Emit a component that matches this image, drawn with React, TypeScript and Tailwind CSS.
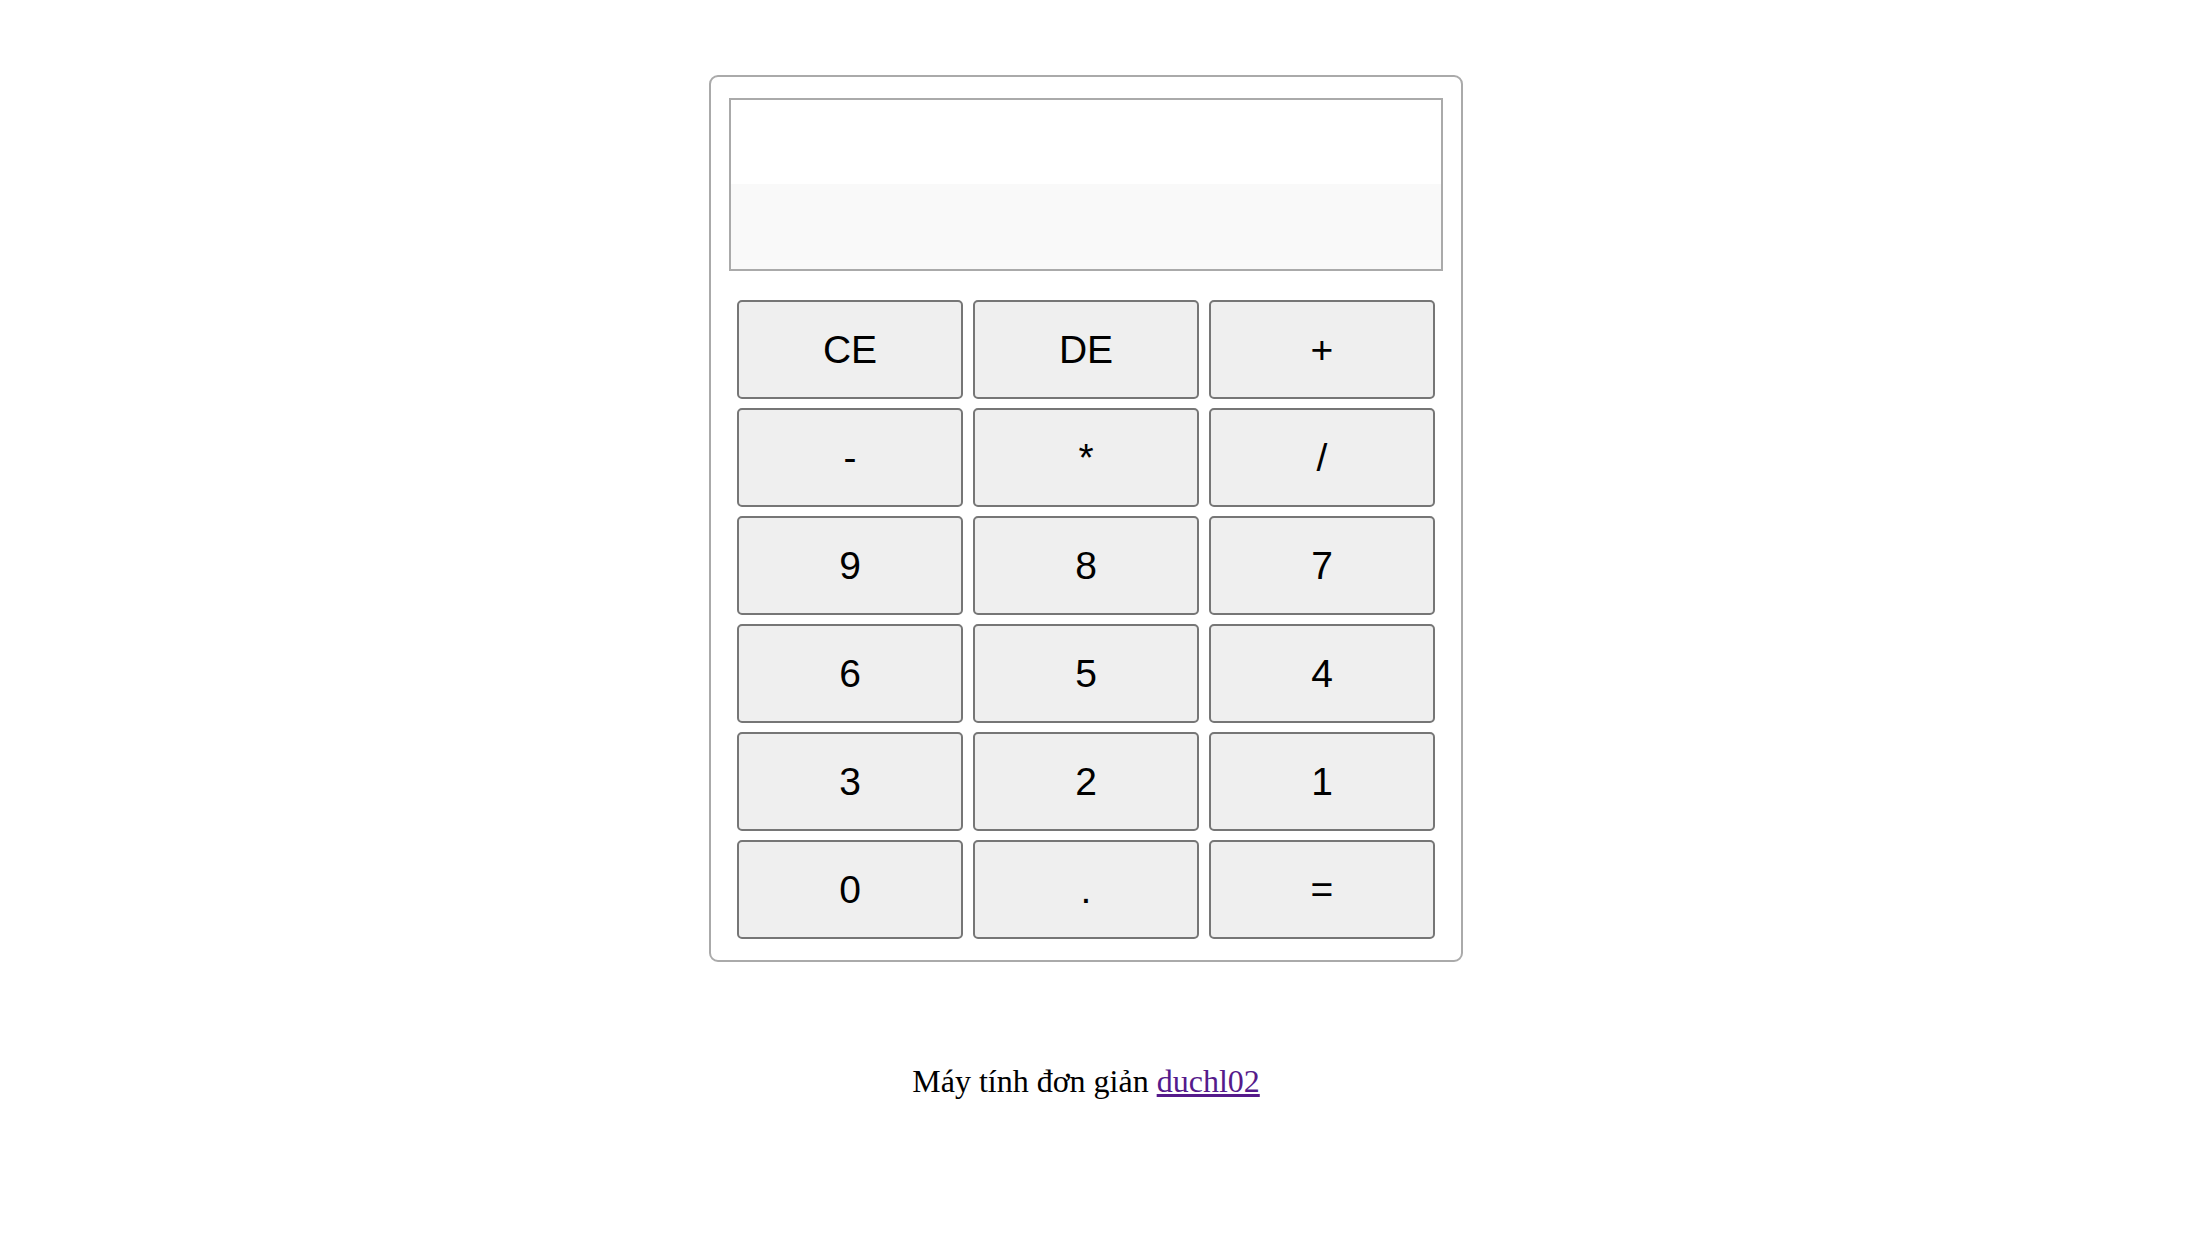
const keys = ["CE", "DE", "+", "-", "*", "/", "9", "8", "7", "6", "5", "4", "3", "2", "1", "0", ".", "="];

const App = () => {
  return (
    <div className="min-h-screen bg-white pt-[75px] pr-[38px] flex flex-col items-center">
      <div className="w-[754px] border-2 border-[#aaaaaa] rounded-[9px] px-[18px] pt-[21px] pb-[21px] bg-white">
        <div className="h-[173px] border-2 border-[#aaaaaa] bg-[linear-gradient(to_bottom,#ffffff_50%,#f9f9f9_50%)]" />
        <div className="mt-[29px] mx-[8px] grid grid-cols-[226px_226px_226px] gap-x-[10px] gap-y-[9px]">
          {keys.map((k) => (
            <button
              key={k}
              className="h-[99px] bg-[#efefef] border-2 border-[#767676] rounded-[5px] text-black text-[39px] leading-none font-['Liberation_Sans',Arial,sans-serif]"
            >
              {k}
            </button>
          ))}
        </div>
      </div>
      <p className="mt-[95px] text-[32px] text-black font-['Liberation_Serif','Times_New_Roman',serif]">
        Máy tính đơn giản{" "}
        <a href="#" className="text-[#551a8b] underline">
          duchl02
        </a>
      </p>
    </div>
  )
}

export default App
